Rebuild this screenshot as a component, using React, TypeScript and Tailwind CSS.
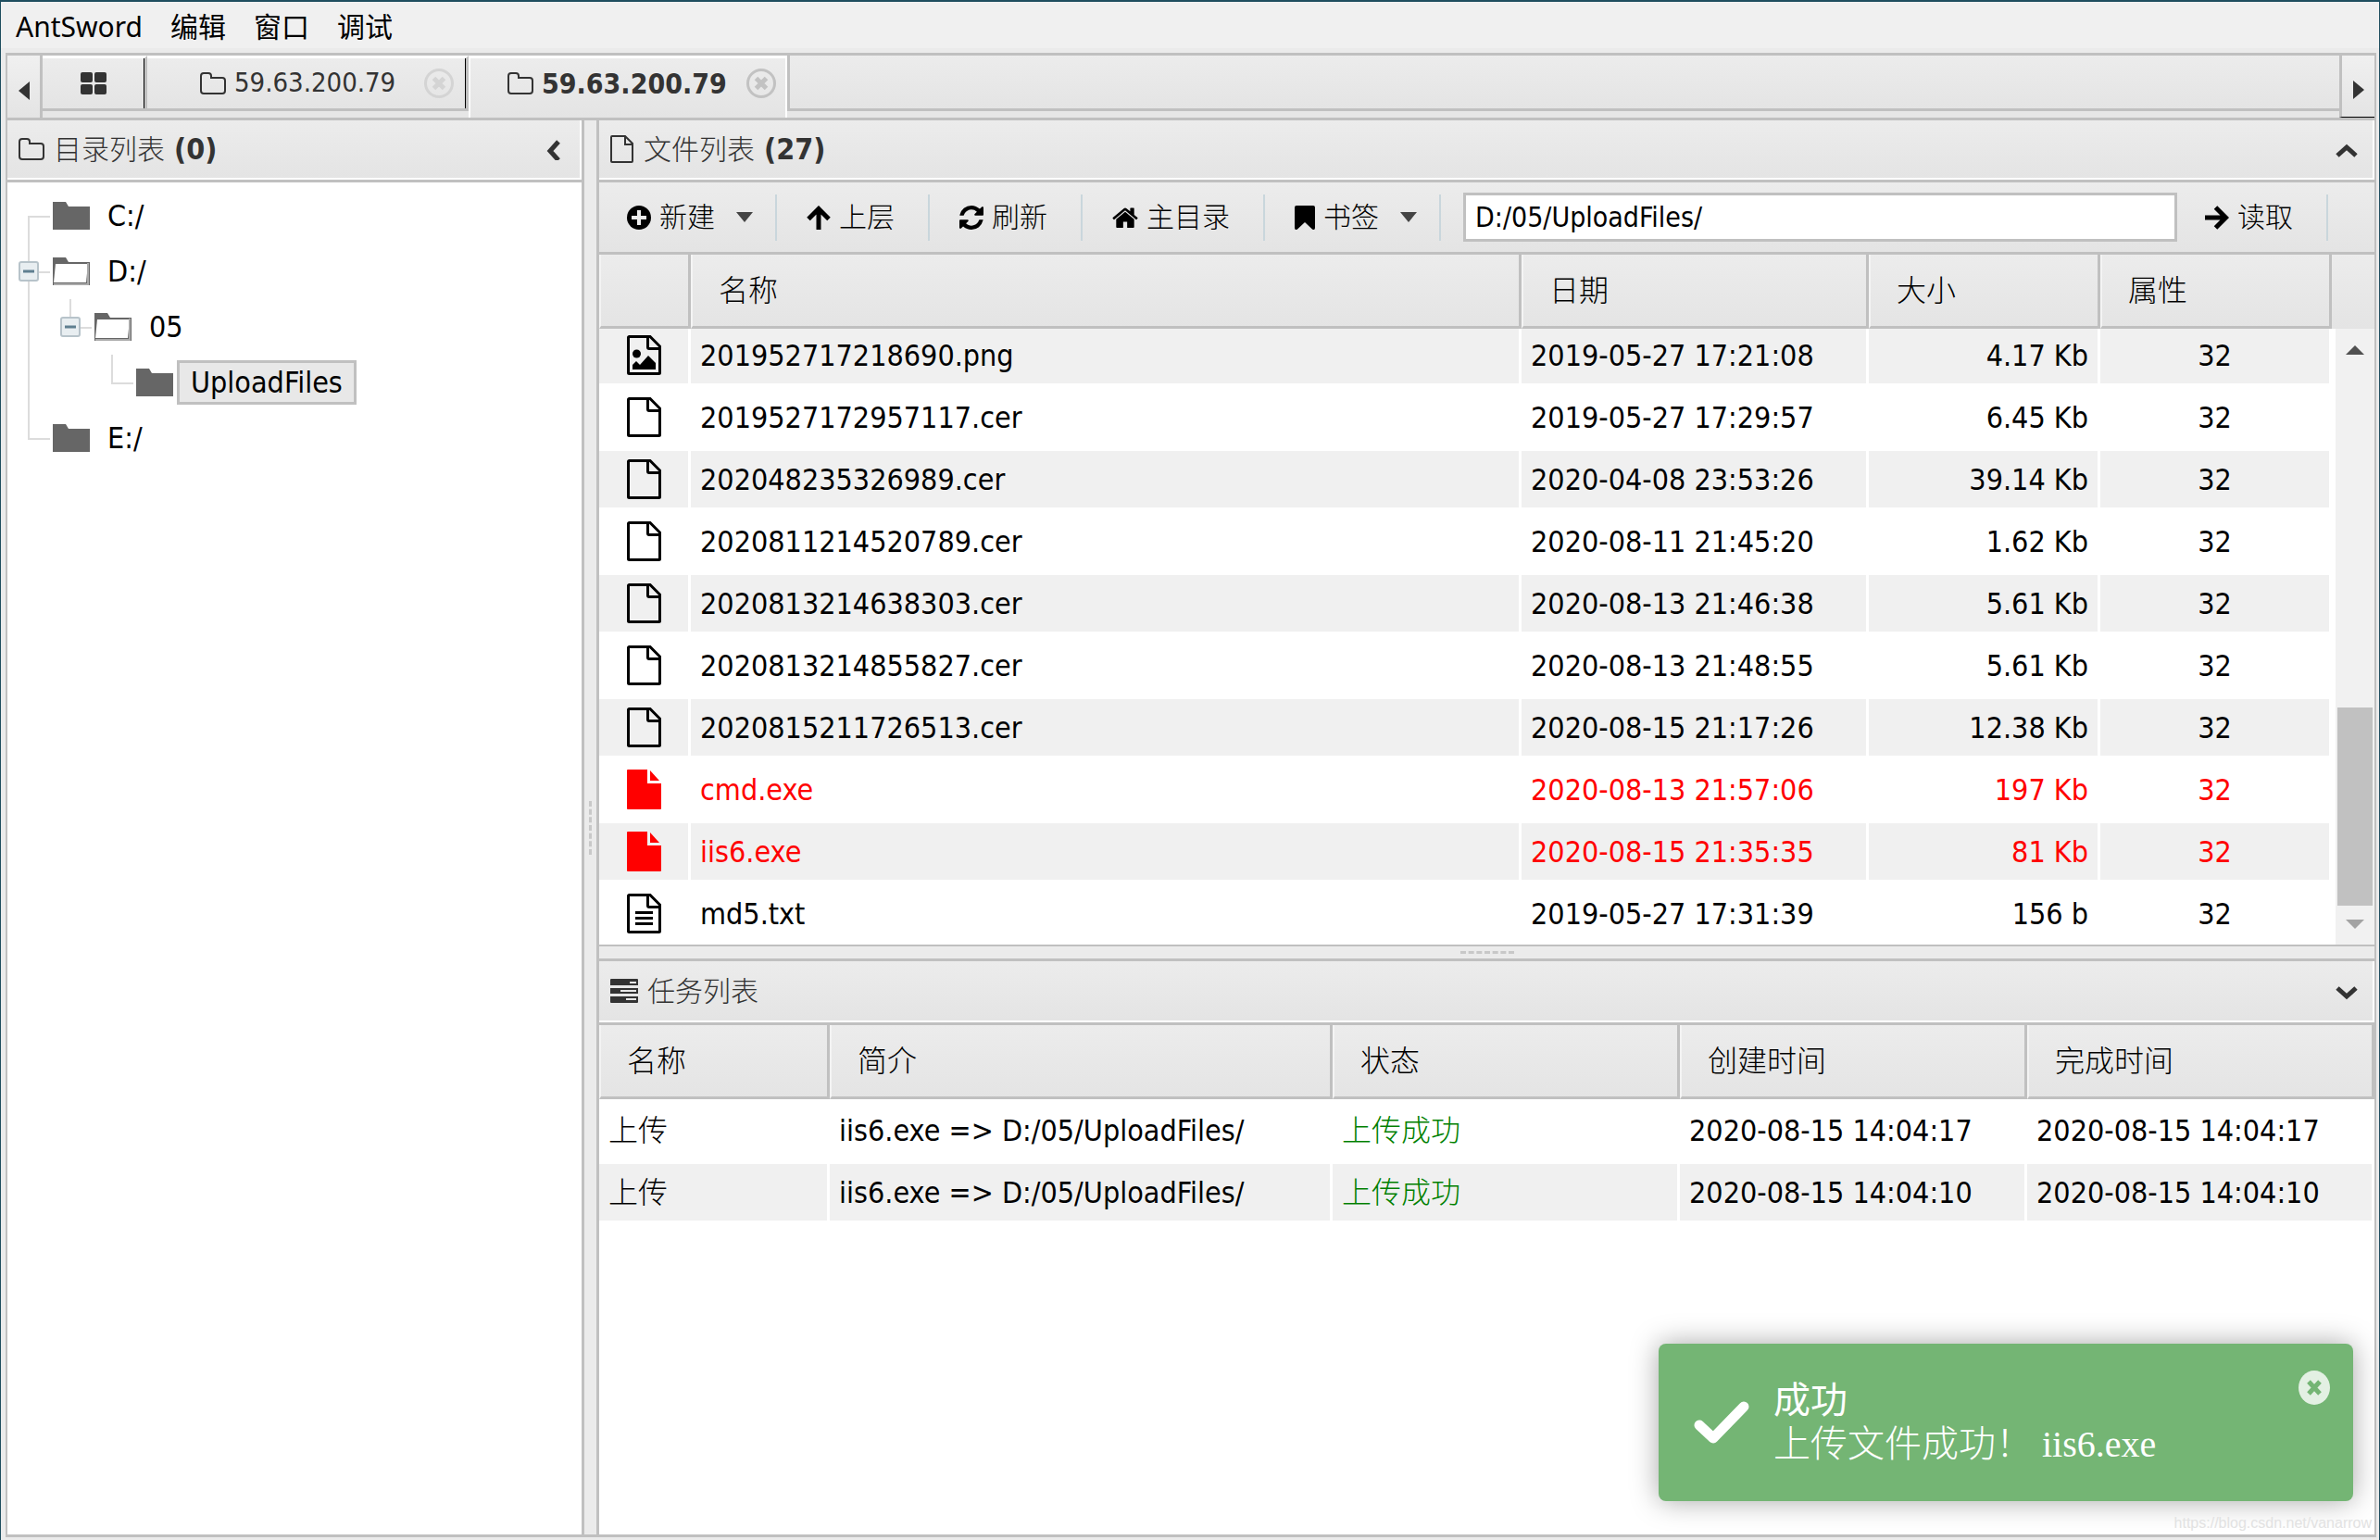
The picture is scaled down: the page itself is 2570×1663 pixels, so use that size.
import React, { useState } from 'react';
import { clsx } from 'clsx';

type FileKind = 'image' | 'file' | 'binary' | 'text';

interface FileRow {
  name: string;
  date: string;
  size: string;
  attr: string;
  kind: FileKind;
}

const files: FileRow[] = [
  { name: '201952717218690.png', date: '2019-05-27 17:21:08', size: '4.17 Kb', attr: '32', kind: 'image' },
  { name: '2019527172957117.cer', date: '2019-05-27 17:29:57', size: '6.45 Kb', attr: '32', kind: 'file' },
  { name: '202048235326989.cer', date: '2020-04-08 23:53:26', size: '39.14 Kb', attr: '32', kind: 'file' },
  { name: '2020811214520789.cer', date: '2020-08-11 21:45:20', size: '1.62 Kb', attr: '32', kind: 'file' },
  { name: '2020813214638303.cer', date: '2020-08-13 21:46:38', size: '5.61 Kb', attr: '32', kind: 'file' },
  { name: '2020813214855827.cer', date: '2020-08-13 21:48:55', size: '5.61 Kb', attr: '32', kind: 'file' },
  { name: '2020815211726513.cer', date: '2020-08-15 21:17:26', size: '12.38 Kb', attr: '32', kind: 'file' },
  { name: 'cmd.exe', date: '2020-08-13 21:57:06', size: '197 Kb', attr: '32', kind: 'binary' },
  { name: 'iis6.exe', date: '2020-08-15 21:35:35', size: '81 Kb', attr: '32', kind: 'binary' },
  { name: 'md5.txt', date: '2019-05-27 17:31:39', size: '156 b', attr: '32', kind: 'text' },
];

const tasks = [
  { name: '上传', desc: 'iis6.exe => D:/05/UploadFiles/', status: '上传成功', start: '2020-08-15 14:04:17', end: '2020-08-15 14:04:17' },
  { name: '上传', desc: 'iis6.exe => D:/05/UploadFiles/', status: '上传成功', start: '2020-08-15 14:04:10', end: '2020-08-15 14:04:10' },
];

const FolderOutline = () => (
  <svg className="w-7 h-6 shrink-0" viewBox="0 0 28 24" fill="none" stroke="currentColor" strokeWidth="2">
    <path d="M1 20V4a3 3 0 0 1 3-3h5a3 3 0 0 1 3 3v2h12a3 3 0 0 1 3 3v11a3 3 0 0 1-3 3H4a3 3 0 0 1-3-3z" />
  </svg>
);

const PageOutline = () => (
  <svg className="w-[26px] h-[30px] shrink-0" viewBox="0 0 26 30" fill="none" stroke="currentColor" strokeWidth="2">
    <path d="M2 1h14l8 8v19a1 1 0 0 1-1 1H2a1 1 0 0 1-1-1V2a1 1 0 0 1 1-1z" />
    <path d="M16 1v9h8" />
  </svg>
);

const FileIcon: React.FC<{ kind: FileKind }> = ({ kind }) => {
  if (kind === 'binary') {
    return (
      <svg className="w-[37px] h-[43px]" viewBox="0 0 37 43" fill="currentColor">
        <path d="M22 0v15h15v27a1 1 0 0 1-1 1H1a1 1 0 0 1-1-1V1a1 1 0 0 1 1-1z" />
        <path d="M25 1l10 11H25z" />
      </svg>
    );
  }
  return (
    <svg className="w-[37px] h-[43px]" viewBox="0 0 37 43" fill="none" stroke="currentColor" strokeWidth="3">
      <path d="M2.500 1.500H25L35.500 12v28.500a1 1 0 0 1-1 1h-32a1 1 0 0 1-1-1v-38a1 1 0 0 1 1-1z" />
      <path d="M22.500 1.500V13a1.500 1.500 0 0 0 1.500 1.500h12" />
      {kind === 'text' && <path d="M9 20.500h19M9 26.500h19M9 32.500h19" />}
      {kind === 'image' && (
        <g fill="currentColor" stroke="none">
          <circle cx="10.500" cy="20" r="4.500" />
          <path d="M6 37v-5l4-4 4 4 9-10 8 8v7z" />
        </g>
      )}
    </svg>
  );
};

const PlusCircle = () => (
  <svg className="w-[26px] h-[26px] shrink-0" viewBox="0 0 26 26">
    <circle cx="13" cy="13" r="13" fill="currentColor" />
    <path d="M13 5v16M5 13h16" stroke="#ececec" strokeWidth="4" />
  </svg>
);

const ArrowUp = () => (
  <svg className="w-[26px] h-[26px] shrink-0" viewBox="0 0 26 26" fill="none" stroke="currentColor" strokeWidth="5">
    <path d="M13 26V4M2 14.500 13 3.500l11 11" />
  </svg>
);

const ArrowRight = () => (
  <svg className="w-[26px] h-[26px] shrink-0" viewBox="0 0 26 26" fill="none" stroke="currentColor" strokeWidth="5">
    <path d="M0 13h22M11.500 2l11 11-11 11" />
  </svg>
);

const Refresh = () => (
  <svg className="w-[26px] h-[26px] shrink-0" viewBox="0 0 1536 1536" fill="currentColor">
    <path d="M1511 928q0 5-1 7-64 268-268 434.500T764 1536q-146 0-282.500-55T238 1324l-129 129q-19 19-45 19t-45-19-19-45V960q0-26 19-45t45-19h448q26 0 45 19t19 45-19 45l-137 137q71 66 161 102t187 36q134 0 250-65t186-179q11-17 53-117 8-23 30-23h192q13 0 22.500 9.500t9.500 22.500zm25-800v448q0 26-19 45t-45 19h-448q-26 0-45-19t-19-45 19-45l138-138Q969 256 768 256q-134 0-250 65T332 500q-11 17-53 117-8 23-30 23H50q-13 0-22.500-9.500T18 608v-7q65-268 270-434.500T768 0q146 0 284 55.500T1297 212l130-129q19-19 45-19t45 19 19 45z" />
  </svg>
);

const Home = () => (
  <svg className="w-7 h-6 shrink-0" viewBox="0 0 1664 1312" fill="currentColor">
    <path d="M1408 768v480q0 26-19 45t-45 19H960V928H704v384H320q-26 0-45-19t-19-45V768q0-1 .5-3t.5-3l575-474 575 474q1 2 1 6zm223-69-62 74q-8 9-21 11h-3q-13 0-21-7L832 200 140 777q-12 8-24 7-13-2-21-11l-62-74q-8-10-7-23.500T37 654l719-599q32-26 76-26t76 26l244 204V64q0-14 9-23t23-9h192q14 0 23 9t9 23v408l219 182q10 8 11 21.500t-7 23.500z" />
  </svg>
);

const Bookmark = () => (
  <svg className="w-[22px] h-[26px] shrink-0" viewBox="0 0 22 26" fill="currentColor">
    <path d="M2 0h18a2 2 0 0 1 2 2v22q0 3-3 1.500l-8-7.500-8 7.500Q0 27 0 24V2a2 2 0 0 1 2-2z" />
  </svg>
);

const TasksIcon = () => (
  <svg className="w-[30px] h-[26px] shrink-0" viewBox="0 0 30 26">
    <path d="M1 0h28a1 1 0 0 1 1 1v6H0V1a1 1 0 0 1 1-1zM0 10h30v6H0zM0 19h30v6a1 1 0 0 1-1 1H1a1 1 0 0 1-1-1z" fill="#333" />
    <path d="M21 3h7v2h-7zM11 12h17v2H11zM17 21h11v2H17z" fill="#e8e8e8" />
  </svg>
);

const Grid4 = () => (
  <svg className="w-7 h-6" viewBox="0 0 28 24" fill="currentColor">
    <rect width="13" height="11" rx="2" />
    <rect x="15" width="13" height="11" rx="2" />
    <rect y="13" width="13" height="11" rx="2" />
    <rect x="15" y="13" width="13" height="11" rx="2" />
  </svg>
);

const Caret = () => (
  <svg className="w-[18px] h-[11px] shrink-0" viewBox="0 0 18 11" fill="#444">
    <path d="M0 0h18L9 11z" />
  </svg>
);

const TabClose: React.FC<{ color: string }> = ({ color }) => (
  <svg className={clsx('w-8 h-8', color)} viewBox="0 0 32 32" fill="none" stroke="currentColor">
    <circle cx="16" cy="16" r="14.500" strokeWidth="3" />
    <path d="M10.500 10.500l11 11M21.500 10.500l-11 11" strokeWidth="5" />
  </svg>
);

const Chevron: React.FC<{ dir: 'left' | 'up' | 'down' }> = ({ dir }) => (
  <svg className="w-6 h-6" viewBox="0 0 24 24" fill="none" stroke="#333" strokeWidth="5">
    {dir === 'left' && <path d="M17 4 8 14l9 10" />}
    {dir === 'up' && <path d="M2 19l10-9 10 9" />}
    {dir === 'down' && <path d="M2 9l10 9 10-9" />}
  </svg>
);

const PanelHeader: React.FC<{
  icon: React.ReactNode;
  title: string;
  count?: number;
  dir: 'left' | 'up' | 'down';
  height?: string;
}> = ({ icon, title, count, dir, height = 'h-16' }) => (
  <div className="shrink-0 border-b-3 border-[#c0c0c0]">
    <div
      className={clsx(
        'flex items-center gap-[10px] pl-3 pr-4 border-b-2 border-r-2 border-white bg-linear-to-b from-[#ececec] to-[#e4e4e4] text-[30px] text-[#333]',
        height
      )}
    >
      {icon}
      <h2>
        <span className="font-light">{title}</span>
        {count !== undefined && <span className="text-[32px] font-bold"> ({count})</span>}
      </h2>
      <button type="button" aria-label="折叠" className="ml-auto">
        <Chevron dir={dir} />
      </button>
    </div>
  </div>
);

const ToolButton: React.FC<{ icon: React.ReactNode; label: string; menu?: boolean }> = ({ icon, label, menu }) => (
  <div className="flex items-center h-[50px] pl-8 pr-9 border-r-2 border-[#c9d6dc] first:pl-[30px] has-[.menu]:pr-6">
    <button type="button" className="flex items-center gap-[9px] font-light whitespace-nowrap">
      {icon}
      {label}
      {menu && (
        <span className="menu ml-[14px]">
          <Caret />
        </span>
      )}
    </button>
  </div>
);

const HeadCell: React.FC<{ width?: string; children?: React.ReactNode }> = ({ width, children }) => (
  <th
    className={clsx(
      'h-20 pl-7 text-left font-light border-r-3 border-b-3 border-[#c0c0c0] border-l-2 border-l-[#f4f4f4]',
      width
    )}
  >
    {children}
  </th>
);

const TreeFolder: React.FC<{ open?: boolean }> = ({ open }) => (
  <svg className="w-10 h-8 shrink-0" viewBox="0 0 40 32">
    <path d="M0 1h14l3 5h23v25H0z" fill="#666" />
    {open && <path d="M3 8h35l-2 20H1z" fill="#fff" />}
    {open && <path d="M1 30h37V7" fill="none" stroke="#aaa" strokeWidth="2" />}
  </svg>
);

const TreeToggle = () => (
  <svg className="w-[22px] h-[22px]" viewBox="0 0 22 22">
    <rect x="1" y="1" width="20" height="20" rx="2" fill="#e8eef1" stroke="#b7c3ca" strokeWidth="2" />
    <path d="M5 11h12" stroke="#5f7f90" strokeWidth="3" />
  </svg>
);

// One 45px wide slot of the tree in front of a folder: guide lines plus an optional toggle
const TreeGuide: React.FC<{ up?: boolean; down?: boolean; branch?: boolean; toggle?: boolean }> = ({
  up,
  down,
  branch,
  toggle,
}) => (
  <span className="relative w-[45px] h-[60px] shrink-0">
    {up && <span className="absolute left-[18px] top-0 h-1/2 w-[2px] bg-[#dcdcdc]" />}
    {down && <span className="absolute left-[18px] top-1/2 h-1/2 w-[2px] bg-[#dcdcdc]" />}
    {branch && <span className="absolute left-[18px] top-1/2 h-[2px] w-6 bg-[#dcdcdc]" />}
    {toggle && (
      <button type="button" aria-label="收起" className="absolute left-2 top-[19px] flex">
        <TreeToggle />
      </button>
    )}
  </span>
);

const TreeLabel: React.FC<{ selected?: boolean; children: React.ReactNode }> = ({ selected, children }) => (
  <button
    type="button"
    className={clsx(
      'ml-1 h-12 px-3 border-3 leading-[40px]',
      selected ? 'border-[#c0c0c0] bg-[#e8e8e8]' : 'border-transparent'
    )}
  >
    {children}
  </button>
);

const Sidebar = () => (
  <aside className="flex flex-col w-[623px] shrink-0 border-r-3 border-[#c0c0c0] bg-white">
    <PanelHeader icon={<FolderOutline />} title="目录列表" count={0} dir="left" />
    <ul className="pl-1 pt-[6px] text-[32px]">
      <li className="flex items-center">
        <TreeGuide down branch />
        <TreeFolder />
        <TreeLabel>C:/</TreeLabel>
      </li>
      <li className="flex items-center">
        <TreeGuide up down branch toggle />
        <TreeFolder open />
        <TreeLabel>D:/</TreeLabel>
      </li>
      <li className="flex items-center">
        <TreeGuide up down />
        <TreeGuide up branch toggle />
        <TreeFolder open />
        <TreeLabel>05</TreeLabel>
      </li>
      <li className="flex items-center">
        <TreeGuide up down />
        <TreeGuide />
        <TreeGuide up branch />
        <TreeFolder />
        <TreeLabel selected>UploadFiles</TreeLabel>
      </li>
      <li className="flex items-center">
        <TreeGuide up branch />
        <TreeFolder />
        <TreeLabel>E:/</TreeLabel>
      </li>
    </ul>
  </aside>
);

const FileCols = () => (
  <colgroup>
    <col className="w-[99px]" />
    <col />
    <col className="w-[375px]" />
    <col className="w-[250px]" />
    <col className="w-[250px]" />
  </colgroup>
);

const FilePanel = () => {
  const [path, setPath] = useState('D:/05/UploadFiles/');

  return (
    <section className="flex flex-col border-b-2 border-[#c0c0c0] bg-white">
      <PanelHeader icon={<PageOutline />} title="文件列表" count={27} dir="up" />

      <div className="flex items-center h-[78px] shrink-0 border-b-3 border-[#c0c0c0] bg-linear-to-b from-[#ececec] to-[#e4e4e4] text-[30px]">
        <ToolButton icon={<PlusCircle />} label="新建" menu />
        <ToolButton icon={<ArrowUp />} label="上层" />
        <ToolButton icon={<Refresh />} label="刷新" />
        <ToolButton icon={<Home />} label="主目录" />
        <ToolButton icon={<Bookmark />} label="书签" menu />
        <input
          type="text"
          aria-label="路径"
          value={path}
          onChange={(e) => setPath(e.target.value)}
          className="flex-1 min-w-0 h-[53px] ml-6 px-[10px] border-3 border-[#c0c0c0] bg-white outline-none"
        />
        <div className="mr-[50px]">
          <ToolButton icon={<ArrowRight />} label="读取" />
        </div>
      </div>

      <div className="shrink-0 pr-[46px] bg-linear-to-b from-[#ececec] to-[#e4e4e4]">
        <table className="w-full table-fixed border-separate border-spacing-0 text-[32px]">
          <FileCols />
          <thead>
            <tr>
              <HeadCell />
              <HeadCell>名称</HeadCell>
              <HeadCell>日期</HeadCell>
              <HeadCell>大小</HeadCell>
              <HeadCell>属性</HeadCell>
            </tr>
          </thead>
        </table>
      </div>

      <div className="flex h-[665px]">
        <div className="flex flex-1 min-w-0 items-end overflow-hidden pr-1">
          <table className="w-full shrink-0 table-fixed border-separate border-spacing-0 text-[32px]">
            <FileCols />
            <tbody>
              {files.map((f, i) => (
                <tr
                  key={f.name}
                  className={clsx(
                    '[&>td]:h-[67px] [&>td]:border-y-3 [&>td]:border-r-3 [&>td]:border-white [&>td]:p-0 [&>td]:leading-[40px]',
                    i % 2 === 0 && 'bg-[#f0f0f0]',
                    f.kind === 'binary' && 'text-[#f00]'
                  )}
                >
                  <td>
                    <span className="flex justify-center">
                      <FileIcon kind={f.kind} />
                    </span>
                  </td>
                  <td>
                    <span className="pl-[10px]">{f.name}</span>
                  </td>
                  <td>
                    <span className="pl-[10px]">{f.date}</span>
                  </td>
                  <td className="text-right">
                    <span className="pr-[10px]">{f.size}</span>
                  </td>
                  <td className="text-center">{f.attr}</td>
                </tr>
              ))}
            </tbody>
          </table>
        </div>
        <div className="flex flex-col items-center w-[42px] shrink-0 bg-[#f1f1f1]">
          <svg className="w-5 h-[45px]" viewBox="0 0 20 45" fill="#505050">
            <path d="M0 28 10 18l10 10z" />
          </svg>
          <div className="mt-auto w-[38px] h-[214px] bg-[#c1c1c1]" />
          <svg className="w-5 h-[42px]" viewBox="0 0 20 42" fill="#a3a3a3">
            <path d="M0 15h20L10 25z" />
          </svg>
        </div>
      </div>
    </section>
  );
};

const TaskPanel = () => (
  <section className="flex flex-col flex-1 border-t-3 border-[#c0c0c0] bg-white">
    <PanelHeader icon={<TasksIcon />} title="任务列表" dir="down" height="h-[66px]" />
    <table className="w-full table-fixed border-separate border-spacing-0 text-[32px]">
      <thead>
        <tr className="bg-linear-to-b from-[#ececec] to-[#e4e4e4]">
          <HeadCell width="w-[249px]">名称</HeadCell>
          <HeadCell>简介</HeadCell>
          <HeadCell width="w-[375px]">状态</HeadCell>
          <HeadCell width="w-[375px]">创建时间</HeadCell>
          <HeadCell width="w-[375px]">完成时间</HeadCell>
        </tr>
      </thead>
      <tbody>
        {tasks.map((t, i) => (
          <tr
            key={i}
            className={clsx(
              '[&>td]:h-[67px] [&>td]:border-y-3 [&>td]:border-r-3 [&>td]:border-white [&>td]:py-0 [&>td]:pl-[10px] [&>td]:leading-[40px]',
              i % 2 === 1 && 'bg-[#f0f0f0]'
            )}
          >
            <td className="font-light">{t.name}</td>
            <td>{t.desc}</td>
            <td className="font-light text-[#008000]">{t.status}</td>
            <td>{t.start}</td>
            <td>{t.end}</td>
          </tr>
        ))}
      </tbody>
    </table>
  </section>
);

const Toast = () => (
  <div
    role="status"
    className="absolute right-[28px] bottom-[42px] flex items-center w-[750px] h-[170px] rounded-lg bg-[#74b574] pl-[38px] text-white shadow-[0_0_30px_rgba(0,0,0,0.35)]"
  >
    <svg className="w-[60px] h-[46px] shrink-0" viewBox="0 0 60 46" fill="none" stroke="#fff" strokeWidth="11" strokeLinecap="round" strokeLinejoin="round">
      <path d="M6 26l15 14L54 6" />
    </svg>
    <div className="pl-[26px] font-['Liberation_Serif','Noto_Sans_CJK_SC',serif] text-[40px] leading-[47px]">
      <div>成功</div>
      <div className="font-light">上传文件成功！ iis6.exe</div>
    </div>
    <button type="button" aria-label="关闭" className="absolute right-[25px] top-[29px]">
      <svg className="w-[34px] h-[37px]" viewBox="0 0 34 37">
        <ellipse cx="17" cy="18.500" rx="17" ry="18.500" fill="#e3f0e3" />
        <path d="M11 12l12 13M23 12 11 25" stroke="#74b574" strokeWidth="5" />
      </svg>
    </button>
  </div>
);

export default function App() {
  const menus = ['AntSword', '编辑', '窗口', '调试'];

  return (
    <div className="relative flex flex-col min-h-screen border-t-2 border-x border-[#1f4e5f] bg-[#ebebeb] font-['DejaVu_Sans_Condensed','Noto_Sans_CJK_SC',sans-serif] text-black">
      <nav className="flex items-center gap-[30px] h-[50px] shrink-0 pt-[2px] pl-4 bg-[#f0f0f0] font-['Noto_Sans','Noto_Sans_CJK_SC',sans-serif] text-[30px]">
        {menus.map((m) => (
          <button key={m} type="button">
            {m}
          </button>
        ))}
      </nav>

      <div className="flex flex-col flex-1 mt-[5px] ml-[5px] mr-[3px] mb-[3px] border-x-2 border-y-3 border-[#c0c0c0]">
        {/* Tabs */}
        <div className="flex h-[70px] shrink-0 border-b-3 border-[#c0c0c0] text-[#333]">
          <button type="button" aria-label="向左" className="flex items-center justify-center w-[38px] pt-2 border-r-3 border-[#c0c0c0] bg-linear-to-b from-[#f0f0f0] to-[#e4e4e4]">
            <svg className="w-3 h-5" viewBox="0 0 12 20" fill="#333">
              <path d="M12 0v20L0 10z" />
            </svg>
          </button>
          <div className="flex flex-1 pb-[7px] bg-[#e6e6e6]">
            <div className="flex w-[113px] border-t-3 border-t-white border-b-3 border-b-[#c0c0c0] border-r-3 border-r-[#c0c0c0] bg-linear-to-b from-[#ececec] to-[#e4e4e4]">
              <div className="flex flex-1 items-center justify-center border-r border-black">
                <button type="button" aria-label="主页">
                  <Grid4 />
                </button>
              </div>
            </div>
            <div className="flex w-[347px] border-t-3 border-t-white border-b-3 border-b-[#c0c0c0] border-r-3 border-r-[#c0c0c0] bg-linear-to-b from-[#ececec] to-[#e4e4e4] text-[29px]">
              <div className="flex flex-1 items-center pl-[57px] pr-3 border-r border-black">
                <button type="button" className="flex items-center gap-[9px]">
                  <FolderOutline />
                  59.63.200.79
                </button>
                <button type="button" aria-label="关闭标签" className="ml-auto">
                  <TabClose color="text-[#d4d4d4]" />
                </button>
              </div>
            </div>
            <div className="flex items-center w-[344px] -mb-[7px] pb-[10px] pl-10 pr-[10px] border-x-2 border-t-3 border-white bg-linear-to-b from-[#ececec] to-[#e4e4e4] text-[30px] font-bold">
              <button type="button" className="flex items-center gap-[9px]">
                <FolderOutline />
                59.63.200.79
              </button>
              <button type="button" aria-label="关闭标签" className="ml-auto">
                <TabClose color="text-[#c2c2c2]" />
              </button>
            </div>
            <div className="flex-1 border-l-3 border-b-3 border-[#c0c0c0] bg-linear-to-b from-[#ececec] to-[#e4e4e4]" />
          </div>
          <button type="button" aria-label="向右" className="flex items-center justify-center w-[38px] pt-2 border-l-3 border-l-[#c0c0c0] border-b border-b-black bg-linear-to-b from-[#f0f0f0] to-[#e4e4e4]">
            <svg className="w-3 h-5" viewBox="0 0 12 20" fill="#333">
              <path d="M0 0v20l12-10z" />
            </svg>
          </button>
        </div>

        <div className="flex flex-1">
          <Sidebar />
          <div className="flex items-center justify-center w-[13px] shrink-0">
            <div className="w-[3px] h-[58px] border-l-3 border-dashed border-[#c8c8c8]" />
          </div>
          <main className="flex flex-col flex-1 min-w-0 border-l-3 border-[#c0c0c0]">
            <FilePanel />
            <div className="flex items-center justify-center h-[13px] shrink-0 bg-[#ebebeb]">
              <div className="w-[58px] h-[3px] border-t-3 border-dashed border-[#c8c8c8]" />
            </div>
            <TaskPanel />
          </main>
        </div>
      </div>

      <Toast />
      <div className="absolute right-2 bottom-2 font-['Liberation_Sans',sans-serif] text-[16px] leading-[20px] text-[#e2e2e2]">
        https://blog.csdn.net/vanarrow
      </div>
    </div>
  );
}
